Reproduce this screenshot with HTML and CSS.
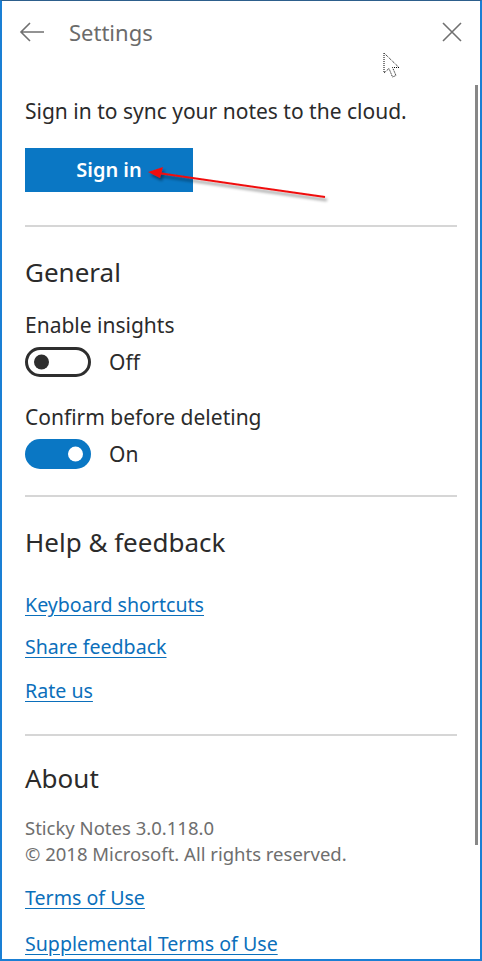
FILE: index.html
```html
<!DOCTYPE html>
<html>
<head>
<meta charset="utf-8">
<link rel="stylesheet" href="styles.css">
</head>
<body>
<div class="window">
  <header class="titlebar">
    <svg class="back" width="26" height="20" viewBox="0 0 26 20"><path d="M25 10H2M11 1L2 10l9 9" fill="none" stroke="#707070" stroke-width="1.6"/></svg>
    <span class="title">Settings</span>
    <svg class="close" width="20" height="20" viewBox="0 0 20 20"><path d="M1 1L19 19M19 1L1 19" fill="none" stroke="#707070" stroke-width="1.6"/></svg>
  </header>
  <main class="content">
    <section class="section">
      <p class="text intro">Sign in to sync your notes to the cloud.</p>
      <button class="signin">Sign in</button>
    </section>
    <hr class="divider d1">
    <section class="section">
      <h2 class="heading">General</h2>
      <div class="setting">
        <div class="text">Enable insights</div>
        <div class="toggle-row">
          <span class="toggle off"><span class="knob"></span></span>
          <span class="state">Off</span>
        </div>
      </div>
      <div class="setting">
        <div class="text">Confirm before deleting</div>
        <div class="toggle-row">
          <span class="toggle on"><span class="knob"></span></span>
          <span class="state">On</span>
        </div>
      </div>
    </section>
    <hr class="divider d2">
    <section class="section">
      <h2 class="heading">Help &amp; feedback</h2>
      <ul class="links help-links">
        <li><a href="#" class="link">Keyboard shortcuts</a></li>
        <li><a href="#" class="link">Share feedback</a></li>
        <li><a href="#" class="link">Rate us</a></li>
      </ul>
    </section>
    <hr class="divider d3">
    <section class="section">
      <h2 class="heading about">About</h2>
      <p class="meta">Sticky Notes 3.0.118.0<br>© 2018 Microsoft. All rights reserved.</p>
      <ul class="links about-links">
        <li><a href="#" class="link">Terms of Use</a></li>
        <li><a href="#" class="link">Supplemental Terms of Use</a></li>
      </ul>
    </section>
  </main>
  <div class="scrollbar"></div>
  <svg class="annot" width="482" height="961" viewBox="0 0 482 961">
    <defs>
      <filter id="sh" x="-10%" y="-50%" width="120%" height="200%">
        <feDropShadow dx="2" dy="3" stdDeviation="1.5" flood-color="#000" flood-opacity="0.45"/>
      </filter>
    </defs>
    <g filter="url(#sh)">
      <path d="M325 197L158 173" stroke="#f01010" stroke-width="2" fill="none"/>
      <path d="M148 172L163 167L160 178Z" fill="#f01010"/>
    </g>
  </svg>
  <svg class="cursor" width="20" height="28" viewBox="0 0 20 28">
    <path d="M1 1V21L6 16.5L9.5 25L13 23.5L9.5 15.5H16Z" fill="#fff" stroke="#000" stroke-width="1" stroke-dasharray="1 1"/>
  </svg>
</div>
</body>
</html>
```

FILE: styles.css
```css
* { box-sizing: border-box; }
html, body { margin: 0; padding: 0; background: #fff; }
body {
  font-family: "Noto Sans", "Open Sans", sans-serif;
  color: #262626;
}
.window {
  position: relative;
  width: 482px;
  height: 961px;
  border-left: 2px solid #1a7fd4;
  border-right: 2px solid #1a7fd4;
  border-bottom: 2px solid #1a7fd4;
  border-top: 1px solid #2d5f8c;
  overflow: hidden;
}
.titlebar {
  display: flex;
  align-items: center;
  height: 62px;
  padding-left: 17px;
  padding-right: 18px;
}
.back { display: block; }
.title {
  margin-left: 24px;
  font-size: 22px;
  color: #6b6b6b;
  flex: 1;
}
.close { display: block; }
.content {
  padding: 0 23px 0 23px;
}
.section { margin: 0; }
.text {
  margin: 0;
  font-size: 21px;
  line-height: 28px;
  color: #2b2b2b;
}
.intro { padding-top: 34px; }
.signin {
  margin-top: 23px;
  width: 168px;
  height: 44px;
  border: 0;
  background: #0a77c4;
  color: #fff;
  font-family: "Noto Sans", "Open Sans", sans-serif;
  font-size: 20px;
  font-weight: 600;
  padding: 0 0 2px 0;
}
.divider {
  border: 0;
  height: 2px;
  background: #d6d6d6;
  margin: 33px 0 0 0;
  width: 432px;
}
.d2 { margin-top: 26px; }
.d3 { margin-top: 29px; }
.heading {
  margin: 0;
  padding-top: 28px;
  font-size: 26px;
  line-height: 34px;
  font-weight: 400;
  color: #2b2b2b;
}
.heading.about { padding-top: 25px; }
.setting { margin-top: 22px; }
.setting + .setting { margin-top: 26px; }
.toggle-row {
  display: flex;
  align-items: center;
  margin-top: 8px;
  height: 30px;
}
.toggle {
  position: relative;
  width: 66px;
  height: 30px;
  border-radius: 15px;
  display: block;
}
.toggle.off { border: 3px solid #2e2e2e; background: #fff; }
.toggle.on { background: #0a77c4; }
.knob {
  position: absolute;
  top: 50%;
  width: 15px;
  height: 15px;
  border-radius: 50%;
  transform: translateY(-50%);
}
.toggle.off .knob { left: 6px; background: #2e2e2e; }
.toggle.on .knob { right: 8px; background: #fff; }
.state {
  margin-left: 18px;
  font-size: 21px;
  color: #2b2b2b;
}
.links {
  list-style: none;
  margin: 0;
  padding: 0;
}
.links li { line-height: 28px; height: 28px; }
.links li + li { margin-top: 14px; }
.help-links { margin-top: 32px; }
.help-links li + li { margin-top: 14px; }
.help-links li + li + li { margin-top: 16px; }
.link {
  font-size: 19.6px;
  color: #0b6fbb;
  text-decoration: underline;
  text-underline-offset: 3px;
}
.meta {
  margin: 20px 0 0 0;
  font-size: 18.5px;
  line-height: 26px;
  color: #6e6e6e;
}
.about-links { margin-top: 17px; }
.about-links li + li { margin-top: 18px; }
.scrollbar {
  position: absolute;
  left: 473px;
  top: 84px;
  width: 3px;
  height: 760px;
  background: #878787;
}
.annot {
  position: absolute;
  left: -2px;
  top: -1px;
  pointer-events: none;
}
.cursor {
  position: absolute;
  left: 381px;
  top: 51px;
}
```
